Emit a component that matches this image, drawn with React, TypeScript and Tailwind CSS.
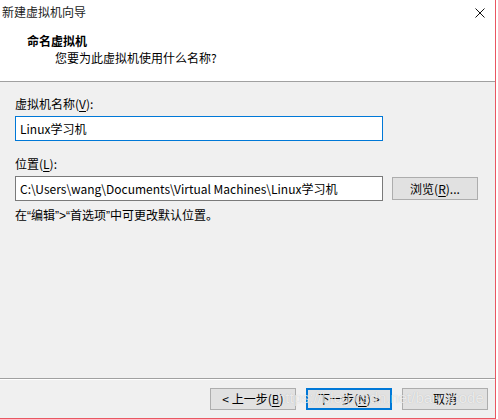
import React from "react";

const font = { fontFamily: '"Noto Sans CJK SC", "Noto Sans", sans-serif' } as React.CSSProperties;
const latin = { fontFamily: '"Liberation Sans", Arial, sans-serif' } as React.CSSProperties;

function U({ children }: { children: React.ReactNode }) {
  return <span className="underline underline-offset-2">{children}</span>;
}

function Q({ children }: { children: React.ReactNode }) {
  return <span style={latin}>{children}</span>;
}

export default function App() {
  return (
    <div className="w-[498px] h-[419px] bg-white flex text-[12px] text-black" style={font}>
      <div className="w-[496px] h-[419px] flex flex-col border-r border-b border-[#ea5661] bg-[#f0f0f0] relative">
        {/* header */}
        <div className="h-[81px] bg-white flex flex-col">
          <div className="h-[24px] flex items-center justify-between pl-[2px] pr-[10px]">
            <span className="leading-[16px] text-[12px] text-[#222]">新建虚拟机向导</span>
            <svg width="10" height="10" viewBox="0 0 10 10" className="mt-[1px]">
              <path d="M0.5 0.5 L9.5 9.5 M9.5 0.5 L0.5 9.5" stroke="#111" strokeWidth="1" />
            </svg>
          </div>
          <div className="pl-[27px] mt-[9px] font-bold leading-[16px]">命名虚拟机</div>
          <div className="pl-[55px] mt-[1px] leading-[16px]">您要为此虚拟机使用什么名称?</div>
        </div>
        <div className="h-px bg-[#a0a0a0]" />
        {/* body */}
        <div className="flex-1 px-[15px] pt-[14px] flex flex-col">
          <div className="leading-[16px]">虚拟机名称(<U>V</U>):</div>
          <div className="mt-[4px] w-[368px] h-[25px] bg-white border border-[#0078d7] flex items-center pl-[4px] leading-[16px]">
            Linux学习机
          </div>
          <div className="mt-[15px] leading-[16px]">位置(<U>L</U>):</div>
          <div className="mt-[4px] flex items-start gap-[9px]">
            <div className="w-[368px] h-[25px] bg-white border border-[#7a7a7a] flex items-center pl-[4px] leading-[16px] whitespace-nowrap overflow-hidden">
              C:\Users\wang\Documents\Virtual Machines\Linux学习机
            </div>
            <div className="mt-[1px] w-[86px] h-[23px] bg-[#e1e1e1] border border-[#adadad] flex items-center justify-center leading-[16px]">
              浏览(<U>R</U>)...
            </div>
          </div>
          <div className="mt-[6px] leading-[16px]">
            在<Q>“</Q>编辑<Q>”&gt;“</Q>首选项<Q>”</Q>中可更改默认位置。
          </div>
        </div>
        {/* footer */}
        <div className="h-px bg-[#a0a0a0]" />
        <div className="h-px bg-white" />
        <div className="h-[38px] flex items-start justify-end pr-[7px] pt-[8px] gap-[10px]">
          <div className="w-[86px] h-[22px] bg-[#e1e1e1] border border-[#adadad] flex items-center justify-center leading-[16px]">
            &lt; 上一步(<U>B</U>)
          </div>
          <div className="w-[86px] h-[22px] bg-[#e1e1e1] border-2 border-[#0078d7] flex items-center justify-center leading-[16px]">
            下一步(<U>N</U>) &gt;
          </div>
          <div className="w-[86px] h-[22px] bg-[#e1e1e1] border border-[#adadad] flex items-center justify-center leading-[16px]">
            取消
          </div>
        </div>
        <div
          className="absolute left-[277px] top-[388px] text-[15px] leading-[20px] text-white/70 whitespace-nowrap pointer-events-none"
          style={{ ...latin, textShadow: "0 0 1px rgba(0,0,0,0.2)" }}
        >
          https://blog.csdn.net/baiyucode
        </div>
      </div>
    </div>
  );
}
